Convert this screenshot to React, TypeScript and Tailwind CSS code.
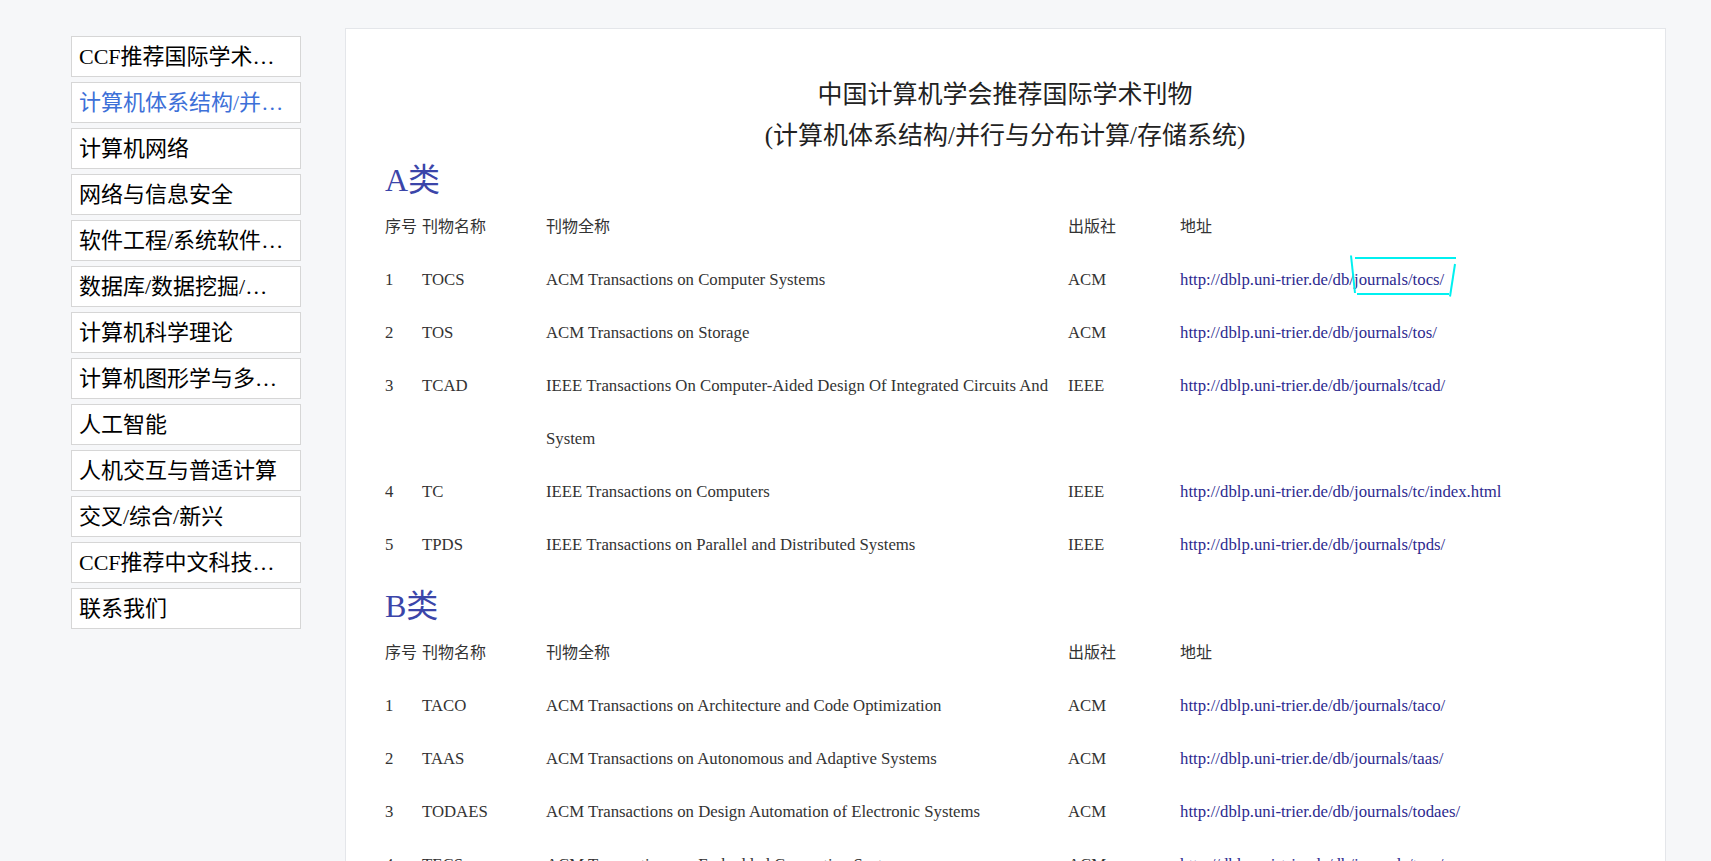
import React from "react";

type Journal = {
  abbr: string;
  name: string;
  publisher: string;
  url: string;
};

const menu = [
  "CCF推荐国际学术期刊",
  "计算机体系结构/并行与分布计算/存储系统",
  "计算机网络",
  "网络与信息安全",
  "软件工程/系统软件/程序设计语言",
  "数据库/数据挖掘/内容检索",
  "计算机科学理论",
  "计算机图形学与多媒体",
  "人工智能",
  "人机交互与普适计算",
  "交叉/综合/新兴",
  "CCF推荐中文科技期刊",
  "联系我们",
];

const base = "http://dblp.uni-trier.de/db/journals/";

const classA: Journal[] = [
  { abbr: "TOCS", name: "ACM Transactions on Computer Systems", publisher: "ACM", url: base + "tocs/" },
  { abbr: "TOS", name: "ACM Transactions on Storage", publisher: "ACM", url: base + "tos/" },
  {
    abbr: "TCAD",
    name: "IEEE Transactions On Computer-Aided Design Of Integrated Circuits And System",
    publisher: "IEEE",
    url: base + "tcad/",
  },
  { abbr: "TC", name: "IEEE Transactions on Computers", publisher: "IEEE", url: base + "tc/index.html" },
  { abbr: "TPDS", name: "IEEE Transactions on Parallel and Distributed Systems", publisher: "IEEE", url: base + "tpds/" },
];

const classB: Journal[] = [
  { abbr: "TACO", name: "ACM Transactions on Architecture and Code Optimization", publisher: "ACM", url: base + "taco/" },
  { abbr: "TAAS", name: "ACM Transactions on Autonomous and Adaptive Systems", publisher: "ACM", url: base + "taas/" },
  { abbr: "TODAES", name: "ACM Transactions on Design Automation of Electronic Systems", publisher: "ACM", url: base + "todaes/" },
  { abbr: "TECS", name: "ACM Transactions on Embedded Computing Systems", publisher: "ACM", url: base + "tecs/" },
  { abbr: "TRETS", name: "ACM Transactions on Reconfigurable Technology and Systems", publisher: "ACM", url: base + "trets/" },
  { abbr: "JPDC", name: "Journal of Parallel and Distributed Computing", publisher: "Elsevier", url: base + "jpdc/" },
];

const font = "font-['Liberation_Serif','Noto_Sans_CJK_SC',serif]";

function JournalTable({ rows, marked }: { rows: Journal[]; marked?: boolean }) {
  return (
    <div className="grid grid-cols-[37px_124px_522px_112px_1fr] text-[16.75px] leading-[53px] text-[#333]">
      {/* header */}
      <div className="text-[16px]">序号</div>
      <div className="text-[16px]">刊物名称</div>
      <div className="text-[16px]">刊物全称</div>
      <div className="text-[16px]">出版社</div>
      <div className="text-[16px]">地址</div>

      {rows.map((r, i) => (
        <React.Fragment key={r.abbr}>
          <div>{i + 1}</div>
          <div>{r.abbr}</div>
          <div className="pr-[16px]">{r.name}</div>
          <div>{r.publisher}</div>
          <div className="relative">
            <a href={r.url} className="text-[#2d2a8f]">
              {r.url}
            </a>
            {marked && i === 0 && (
              <svg
                className="absolute left-[169px] top-[1px] pointer-events-none"
                width="112"
                height="46"
                viewBox="0 0 112 46"
                fill="none"
                stroke="#00f0f0"
                strokeWidth="2"
              >
                <line x1="2" y1="1.5" x2="6" y2="39" />
                <line x1="6" y1="4" x2="107" y2="4" />
                <line x1="8" y1="40" x2="100" y2="40" />
                <line x1="106" y1="10" x2="101" y2="42.5" />
              </svg>
            )}
          </div>
        </React.Fragment>
      ))}
    </div>
  );
}

export default function App() {
  const active = 1;

  return (
    <div className={`min-h-screen bg-[#f6f7f9] ${font}`}>
      <div className="flex items-start pl-[71px] pr-[45px] pt-[28px]">
        {/* Side menu */}
        <nav className="mt-[8px] flex w-[230px] shrink-0 flex-col gap-[5px]">
          {menu.map((item, i) => (
            <div
              key={item}
              className={`h-[41px] truncate border border-[#d6d6d6] bg-white pl-[7px] pr-[14px] text-[22px] leading-[39px] ${
                i === active ? "text-[#3d70d8]" : "text-black"
              }`}
            >
              {item}
            </div>
          ))}
        </nav>

        {/* Main content */}
        <main className="ml-[44px] min-w-0 flex-1 border border-[#e4e6ea] bg-white pb-10 pl-[39px] pr-10 pt-[45px]">
          <h1 className="text-center text-[25px] font-normal leading-[41px] text-[#222]">
            中国计算机学会推荐国际学术刊物
            <br />
            (计算机体系结构/并行与分布计算/存储系统)
          </h1>

          <h2 className="mt-[5px] text-[32px] leading-[39px] text-[#3b45a9]">A类</h2>
          <JournalTable rows={classA} marked />

          <h2 className="mt-[16px] text-[32px] leading-[39px] text-[#3b45a9]">B类</h2>
          <JournalTable rows={classB} />
        </main>
      </div>
    </div>
  );
}
